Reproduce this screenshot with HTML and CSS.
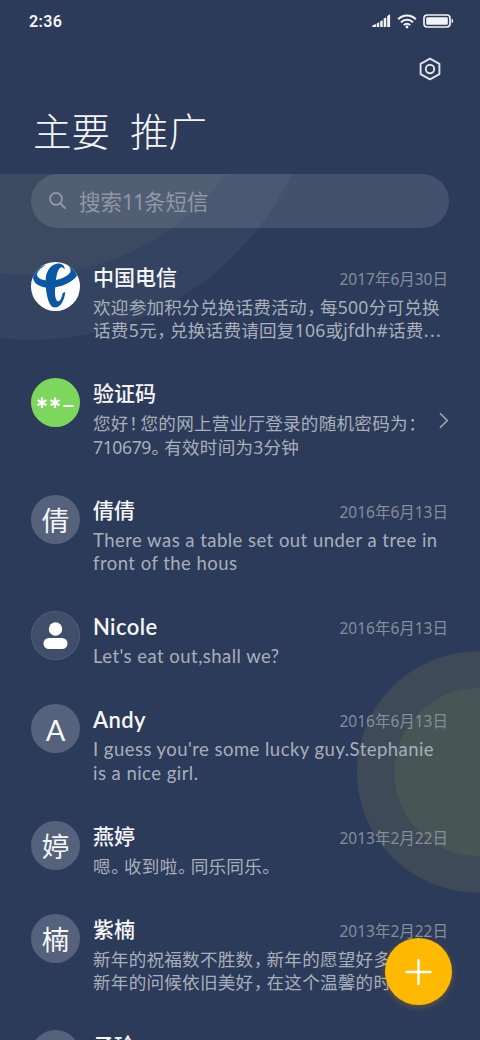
FILE: index.html
```html
<!DOCTYPE html>
<html lang="zh-CN">
<head>
<meta charset="utf-8">
<title>短信</title>
<link rel="stylesheet" href="styles.css">
</head>
<body>
<div class="screen">
  <svg class="backdrop" width="480" height="1040" viewBox="0 0 480 1040">
    <defs><clipPath id="below"><rect x="0" y="174" width="480" height="866"/></clipPath></defs>
    <g clip-path="url(#below)">
      <circle cx="30" cy="51" r="289" fill="#34435f"/>
      <circle cx="27" cy="28" r="247" fill="#3b4a61"/>
    </g>
    <circle cx="477.5" cy="772" r="120.5" fill="#3e4a58"/>
    <circle cx="478.5" cy="772" r="84" fill="#485555"/>
  </svg>

  <header class="status">
    <span class="clock">2:36</span>
    <div class="status-icons">
      <svg width="19" height="14" viewBox="0 0 19 14" fill="#f2f4f8"><path d="M.3 13V11.400L3.900 9.900V13ZM4.700 9.400l2.500-1.100V13H4.700ZM8.200 7.300l2.500-1.100V13H8.200ZM11.700 4.600l2.500-1.200V13h-2.500ZM15.200 2l2.900-1.700V13h-2.900Z"/></svg>
      <svg class="wifi" width="20" height="15" viewBox="0 0 20 15" fill="none" stroke="#f2f4f8" stroke-width="2"><path d="M1.200 5.200C6 .1 14 .1 18.800 5.200M4 8.300c3.200-3.500 8.800-3.500 12 0M6.800 11.100c1.800-1.900 4.600-1.900 6.400 0"/><circle cx="10" cy="13" r="1.400" fill="#f2f4f8" stroke="none"/></svg>
      <svg class="battery" width="31" height="14" viewBox="0 0 31 14"><rect x="1" y="1" width="26" height="12" rx="3.200" fill="none" stroke="#f2f4f8" stroke-width="1.700"/><rect x="3.200" y="3.200" width="21.600" height="7.600" rx="1.200" fill="#f2f4f8"/><path d="M28.600 4.800c2 .3 2 4.100 0 4.400Z" fill="#f2f4f8"/></svg>
    </div>
  </header>

  <div class="toolbar">
    <svg width="24" height="24" viewBox="0 0 24 24" fill="none" stroke="#e0e3e9" stroke-width="1.900" stroke-linejoin="round"><path d="M12 1.700 21.400 6.900V17.100L12 22.300 2.600 17.100V6.900Z"/><circle cx="12" cy="12" r="4.200"/></svg>
  </div>

  <nav class="tabs"><span>主要</span><span>推广</span></nav>

  <div class="search">
    <svg width="18" height="18" viewBox="0 0 18 18" fill="none" stroke="#929aa9" stroke-width="1.800" stroke-linecap="round"><circle cx="7" cy="7.800" r="6"/><path d="m11.300 12.300 4.600 4.700"/></svg>
    <span>搜索<b>11</b>条短信</span>
  </div>

  <main class="list">
    <article class="item">
      <div class="avatar telecom">
        <svg width="49" height="49" viewBox="5 6 147 147" fill="#0b57a4"><path d="M50 15C28 20 12 33 11 52C12 73 35 84 62 83C94 82 128 68 143 47C140 31 129 19 113 11C121 19 126 29 123 37C115 50 92 60 68 62C43 63 24 56 23 44C24 32 35 24 50 15Z"/><path d="M106 29C107 16 96 8 82 11C62 16 50 34 49 58C48 92 55 126 66 138C75 147 91 141 98 128C104 117 107 106 108 96L100 99C97 113 93 124 86 124C77 121 76 102 78 79C80 55 83 29 93 23C99 20 103 24 106 29Z"/></svg>
      </div>
      <div class="content">
        <div class="head"><h2>中国电信</h2><time>2017年6月30日</time></div>
        <p>欢迎参加积分兑换话费活动<i>，</i>每500分可兑换<br>话费5元<i>，</i>兑换话费请回复106或jfdh#话费<span class="dots">...</span></p>
      </div>
    </article>
    <article class="item">
      <div class="avatar code">
        <svg width="49" height="49" viewBox="0 0 49 49" fill="none" stroke="#fff" stroke-width="2.200"><path d="M11 19.500v10.400M6.500 22.100l9 5.200M15.500 22.100l-9 5.200M24 19.500v10.400M19.500 22.100l9 5.200M28.500 22.100l-9 5.200M32.500 28h10"/></svg>
      </div>
      <div class="content">
        <div class="head"><h2>验证码</h2></div>
        <p>您好<i class="bang">！</i>您的网上营业厅登录的随机密码为<i>：</i><br><span class="digits">710679</span><i>。</i>有效时间为3分钟</p>
      </div>
      <svg class="chevron" width="10" height="17" viewBox="0 0 10 17" fill="none" stroke="#a5acb9" stroke-width="1.500"><path d="M1 1.200 8.300 8.500 1 15.800"/></svg>
    </article>
    <article class="item">
      <div class="avatar">倩</div>
      <div class="content">
        <div class="head"><h2>倩倩</h2><time>2016年6月13日</time></div>
        <p class="latin">There was a table set out under a tree in<br>front of the hous</p>
      </div>
    </article>
    <article class="item">
      <div class="avatar person">
        <svg width="49" height="49" viewBox="0 0 49 49" fill="#fff"><circle cx="24.500" cy="18" r="6.700"/><rect x="12.500" y="27" width="24" height="11" rx="5.500"/></svg>
      </div>
      <div class="content">
        <div class="head"><h2 class="latin-name">Nicole</h2><time>2016年6月13日</time></div>
        <p class="latin">Let's eat out,shall we?</p>
      </div>
    </article>
    <article class="item">
      <div class="avatar letter">A</div>
      <div class="content">
        <div class="head"><h2 class="latin-name">Andy</h2><time>2016年6月13日</time></div>
        <p class="latin">I guess you're some lucky guy.Stephanie<br>is a nice girl.</p>
      </div>
    </article>
    <article class="item">
      <div class="avatar">婷</div>
      <div class="content">
        <div class="head"><h2>燕婷</h2><time>2013年2月22日</time></div>
        <p>嗯<i>。</i>收到啦<i>。</i>同乐同乐<i>。</i></p>
      </div>
    </article>
    <article class="item">
      <div class="avatar">楠</div>
      <div class="content">
        <div class="head"><h2>紫楠</h2><time>2013年2月22日</time></div>
        <p>新年的祝福数不胜数<i>，</i>新年的愿望好多<br>新年的问候依旧美好<i>，</i>在这个温馨的时</p>
      </div>
    </article>
    <article class="item">
      <div class="avatar"></div>
      <div class="content">
        <div class="head"><h2>子玲</h2></div>
      </div>
    </article>
  </main>

  <button class="compose" aria-label="新建">
    <svg width="28" height="28" viewBox="0 0 28 28" stroke="#fff" stroke-width="2.400" stroke-linecap="round"><path d="M13.500 2v24M1.500 14h24"/></svg>
  </button>
</div>
</body>
</html>
```

FILE: styles.css
```css
* { box-sizing: border-box; }
body { margin: 0; background: #2d3b5a; }
.screen {
  position: relative;
  width: 480px;
  height: 1040px;
  overflow: hidden;
  isolation: isolate;
  background: #2d3b5a;
  font-family: "Noto Sans", "Noto Sans CJK SC", sans-serif;
  color: #f5f6f9;
}
.backdrop { position: absolute; inset: 0; z-index: -1; }
svg { display: block; flex: none; }

.status {
  height: 42px;
  padding: 0 26px 0 29px;
  display: flex;
  align-items: center;
  justify-content: space-between;
}
.clock { font: 600 16px/20px Roboto, sans-serif; letter-spacing: .4px; padding-top: 1px; }
.status-icons { display: flex; align-items: center; }
.wifi { margin-left: 6px; }
.battery { margin-left: 6px; }

.toolbar { height: 54px; padding: 15px 38px 0 0; display: flex; justify-content: flex-end; }

.tabs {
  height: 78px;
  padding: 3px 0 0 33px;
  display: flex;
  gap: 20px;
  font: 300 38.500px/60px "Noto Sans CJK SC", sans-serif;
}

.search {
  width: 418px;
  height: 54px;
  margin-left: 31px;
  padding: 0 0 2px 18px;
  border-radius: 27px;
  background: rgba(255, 255, 255, .115);
  display: flex;
  align-items: center;
  gap: 12px;
  color: #8f98a7;
  font-size: 21.500px;
}
.search b { font-weight: 400; letter-spacing: -1.300px; }

.list { padding: 34px 32px 0 31px; }
.item { display: flex; padding-bottom: 36.800px; }
.avatar {
  flex: none;
  width: 49px;
  height: 49px;
  border-radius: 50%;
  background: #56617b;
  display: flex;
  align-items: center;
  justify-content: center;
  font: 400 27.500px/49px "Noto Sans CJK SC", sans-serif;
}
.telecom { background: #fff; overflow: hidden; }
.code { background: #7ed75d; }
.person { background: #414e6a; box-shadow: inset 0 0 0 1px #4d5973; }
.letter { padding-top: 2px; font-family: Lato, sans-serif; font-size: 29px; }

.content { flex: 1; min-width: 0; margin-left: 13px; white-space: nowrap; }
.head { height: 33px; display: flex; align-items: center; justify-content: space-between; }
h2 { margin: 0 0 5px; font: 500 21px/30px "Noto Sans CJK SC", sans-serif; }
.latin-name { margin-bottom: 1px; font-family: Lato, sans-serif; font-size: 22px; font-weight: 600; letter-spacing: .4px; }
time { font-size: 15.500px; line-height: 20px; color: #858d9c; margin-top: 1px; }
p { margin: 0 0 -1px; padding-top: 1px; font-size: 17.600px; line-height: 23.300px; letter-spacing: .22px; color: #a8afbb; }
p i { font-style: normal; font-feature-settings: "halt"; margin: 0 3.800px 0 .4px; }
p .bang { margin-right: 2.500px; }
.latin { font-family: Lato, sans-serif; font-size: 18.500px; letter-spacing: .46px; }
.dots { letter-spacing: 1.500px; }
.digits { letter-spacing: -.4px; }
.chevron { margin: 34px -1px 0 -9px; }

.compose {
  position: absolute;
  left: 385px;
  top: 938px;
  width: 67px;
  height: 67px;
  padding: 0;
  border: 0;
  border-radius: 50%;
  background: #ffb900;
  box-shadow: 0 2px 6px rgba(255, 185, 0, .25);
  display: flex;
  align-items: center;
  justify-content: center;
}
```
